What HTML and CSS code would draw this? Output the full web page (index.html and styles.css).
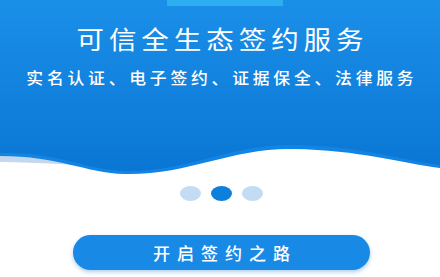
FILE: index.html
```html
<!DOCTYPE html>
<html lang="zh-CN">
<head>
<meta charset="utf-8">
<title>可信全生态签约服务</title>
<link rel="stylesheet" href="styles.css">
</head>
<body>
<div class="page">
  <header class="hero">
    <svg class="hero-bg" width="440" height="180" viewBox="0 0 440 180" aria-hidden="true">
      <defs>
        <linearGradient id="g" x1="0" y1="0" x2="0" y2="1">
          <stop offset="0" stop-color="#1a8fe8"/>
          <stop offset="1" stop-color="#0a76d4"/>
        </linearGradient>
      </defs>
      <path d="M0,140 H110 V166 C80,166 40,162 0,162 Z" fill="#c4d7ec"/>
      <path d="M0,0 H440 V168 C400,163 360,150 293,149 C230,148 190,175 125,174 C85,173 60,156 0,156 Z" fill="#1285e4"/>
      <path d="M0,0 H440 V165 C400,160 360,146 293,145 C230,144 190,172 125,171 C85,170 60,152 0,153 Z" fill="url(#g)"/>
    </svg>
    <div class="hero-tab"></div>
    <h1 class="title"><span>可信全生态签约服务</span></h1>
    <p class="subtitle"><span>实名认证、电子签约、证据保全、法律服务</span></p>
  </header>
  <div class="dots">
    <span class="dot"></span>
    <span class="dot active"></span>
    <span class="dot"></span>
  </div>
  <div class="actions">
    <button class="start">开启签约之路</button>
  </div>
</div>
</body>
</html>
```

FILE: styles.css
```css
html, body {
  margin: 0;
  padding: 0;
  background: #ffffff;
}

.page {
  width: 440px;
  height: 277px;
  overflow: hidden;
  font-family: "Noto Sans CJK SC", "Noto Sans", sans-serif;
  background: #ffffff;
}

.hero {
  position: relative;
  height: 172px;
  display: flex;
  flex-direction: column;
  align-items: center;
}

.hero-bg {
  position: absolute;
  left: 0;
  top: 0;
  z-index: 0;
  display: block;
}

.hero-tab {
  position: relative;
  z-index: 1;
  width: 116px;
  height: 6px;
  margin-left: 10px;
  background: #2caef0;
}

.title {
  position: relative;
  z-index: 1;
  margin: 17px 0 0;
  font-size: 25px;
  line-height: 30px;
  font-weight: 400;
  color: #ffffff;
  white-space: nowrap;
}

.title span {
  display: inline-block;
  letter-spacing: 4.5px;
  padding-left: 4.5px;
  transform: scaleX(1.1);
}

.subtitle {
  position: relative;
  z-index: 1;
  margin: 14px 0 0;
  font-size: 16px;
  line-height: 20px;
  font-weight: 500;
  color: #ffffff;
  white-space: nowrap;
}

.subtitle span {
  display: inline-block;
  letter-spacing: 3.6px;
  padding-left: 3.6px;
  transform: scaleX(1.05);
}

.dots {
  display: flex;
  justify-content: center;
  gap: 10px;
  margin-top: 14px;
  padding-left: 3px;
}

.dot {
  width: 21px;
  height: 15px;
  border-radius: 50%;
  background: #c3dcf4;
}

.dot.active {
  background: #0f7fdc;
}

.actions {
  display: flex;
  justify-content: center;
  margin-top: 34px;
  padding-left: 3px;
}

.start {
  width: 297px;
  height: 35px;
  border: none;
  border-radius: 18px;
  background: #188ae6;
  box-shadow: 0 2px 4px rgba(20, 110, 200, 0.35);
  color: #ffffff;
  font-family: "Noto Sans CJK SC", "Noto Sans", sans-serif;
  font-size: 17px;
  font-weight: 500;
  letter-spacing: 7px;
  padding: 0 0 0 7px;
  cursor: pointer;
}
```
